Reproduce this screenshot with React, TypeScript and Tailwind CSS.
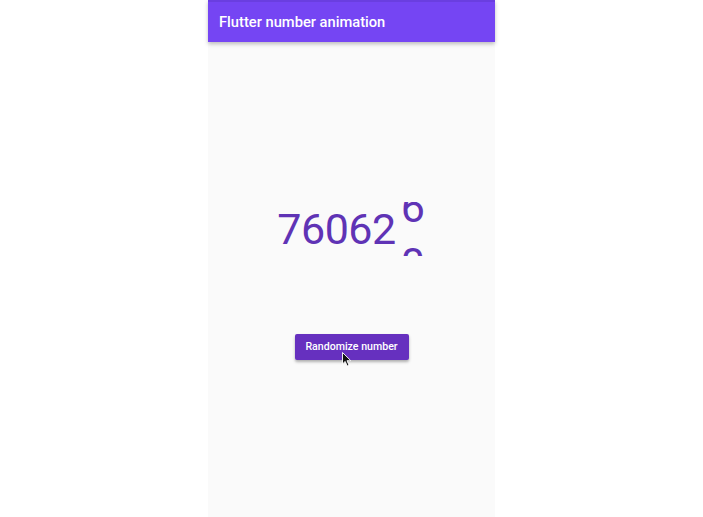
export default function App() {
  return (
    <div className="flex h-[517px] w-[703px] justify-center bg-white" style={{ fontFamily: 'Roboto, "Liberation Sans", sans-serif' }}>
      <div className="flex w-[287px] flex-col bg-[#fafafa]">
        {/* App bar */}
        <div className="relative z-10 flex h-[42px] shrink-0 items-center border-t-2 border-[#6a3ee0] bg-[#7545f3] px-[11px] shadow-[0_2px_4px_rgba(0,0,0,0.25)]">
          <span className="text-[14.7px] font-medium text-white">Flutter number animation</span>
        </div>

        {/* Number */}
        <div className="mt-[160px] flex justify-center text-[43px] text-[#5f33b5]">
          <span className="leading-[54px] tracking-[-0.5px]">76062</span>
          <div className="relative h-[54px] w-[30px] overflow-hidden">
            <span className="absolute left-[5px] top-[-22px] leading-[54px]">6</span>
            <span className="absolute left-[5px] top-[34px] leading-[54px]">0</span>
          </div>
        </div>

        {/* Button */}
        <div className="mt-[78px] flex justify-center">
          <div className="relative">
            <button className="flex h-[26px] w-[114px] items-center justify-center rounded-[2px] bg-[#6630bf] text-[10.6px] font-medium text-white shadow-[0_2px_3px_rgba(0,0,0,0.3)]">
              Randomize number
            </button>
            <svg className="absolute left-[47px] top-[18px]" width="10" height="15" viewBox="0 0 10 15">
              <path d="M0.5 0.5 L0.5 12 L3.2 9.4 L5.2 14 L7 13.2 L5 8.7 L8.8 8.7 Z" fill="#111" stroke="#fff" strokeWidth="0.9" />
            </svg>
          </div>
        </div>
      </div>
    </div>
  )
}
